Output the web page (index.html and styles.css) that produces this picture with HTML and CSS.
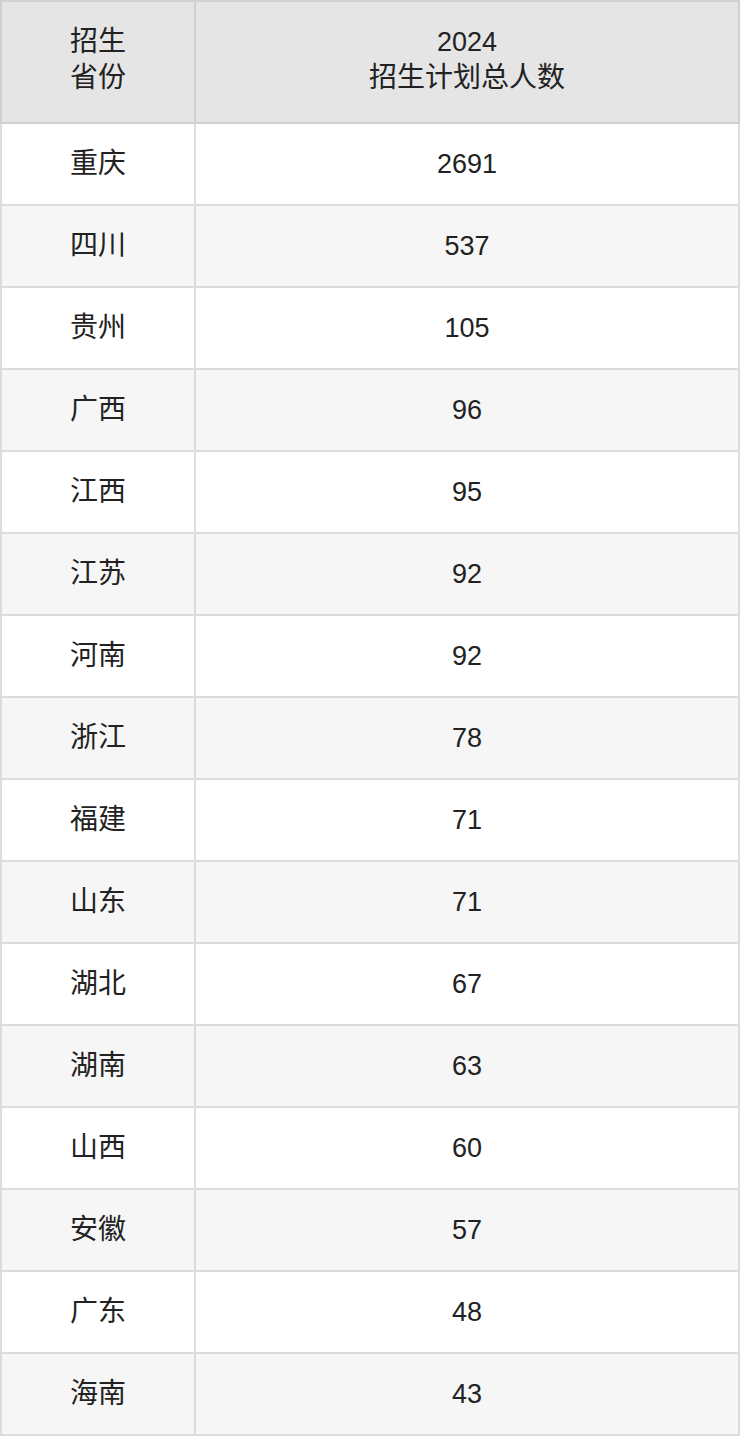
FILE: index.html
```html
<!DOCTYPE html>
<html lang="zh-CN">
<head>
<meta charset="utf-8">
<link rel="stylesheet" href="styles.css">
</head>
<body>
<table class="plan">
  <colgroup><col class="c1"><col class="c2"></colgroup>
  <thead>
    <tr><th class="cjk">招生<br>省份</th><th><span class="num">2024</span><br><span class="cjk">招生计划总人数</span></th></tr>
  </thead>
  <tbody>
    <tr><td class="cjk">重庆</td><td class="num">2691</td></tr>
    <tr><td class="cjk">四川</td><td class="num">537</td></tr>
    <tr><td class="cjk">贵州</td><td class="num">105</td></tr>
    <tr><td class="cjk">广西</td><td class="num">96</td></tr>
    <tr><td class="cjk">江西</td><td class="num">95</td></tr>
    <tr><td class="cjk">江苏</td><td class="num">92</td></tr>
    <tr><td class="cjk">河南</td><td class="num">92</td></tr>
    <tr><td class="cjk">浙江</td><td class="num">78</td></tr>
    <tr><td class="cjk">福建</td><td class="num">71</td></tr>
    <tr><td class="cjk">山东</td><td class="num">71</td></tr>
    <tr><td class="cjk">湖北</td><td class="num">67</td></tr>
    <tr><td class="cjk">湖南</td><td class="num">63</td></tr>
    <tr><td class="cjk">山西</td><td class="num">60</td></tr>
    <tr><td class="cjk">安徽</td><td class="num">57</td></tr>
    <tr><td class="cjk">广东</td><td class="num">48</td></tr>
    <tr><td class="cjk">海南</td><td class="num">43</td></tr>
  </tbody>
</table>
</body>
</html>
```
FILE: styles.css
```css
html, body {
  margin: 0;
  padding: 0;
  background: #ffffff;
}
.plan {
  width: 740px;
  border-collapse: collapse;
  table-layout: fixed;
  font-family: "Liberation Sans", "Noto Sans CJK SC", sans-serif;
  font-size: 27px;
  color: #222222;
}
.c1 { width: 194px; }
.plan th, .plan td {
  border: 2px solid #dcdcdc;
  text-align: center;
  vertical-align: middle;
  padding: 0;
}
.plan th {
  background: #e5e5e5;
  border-color: #d0d0d0;
  font-weight: normal;
  height: 116px;
  padding-bottom: 4px;
  line-height: 36px;
}
.plan td {
  height: 80px;
  line-height: 36px;
}
.cjk { font-size: 28px; }
.num { font-size: 27px; }
.plan tbody tr:nth-child(even) td {
  background: #f6f6f6;
}
```
